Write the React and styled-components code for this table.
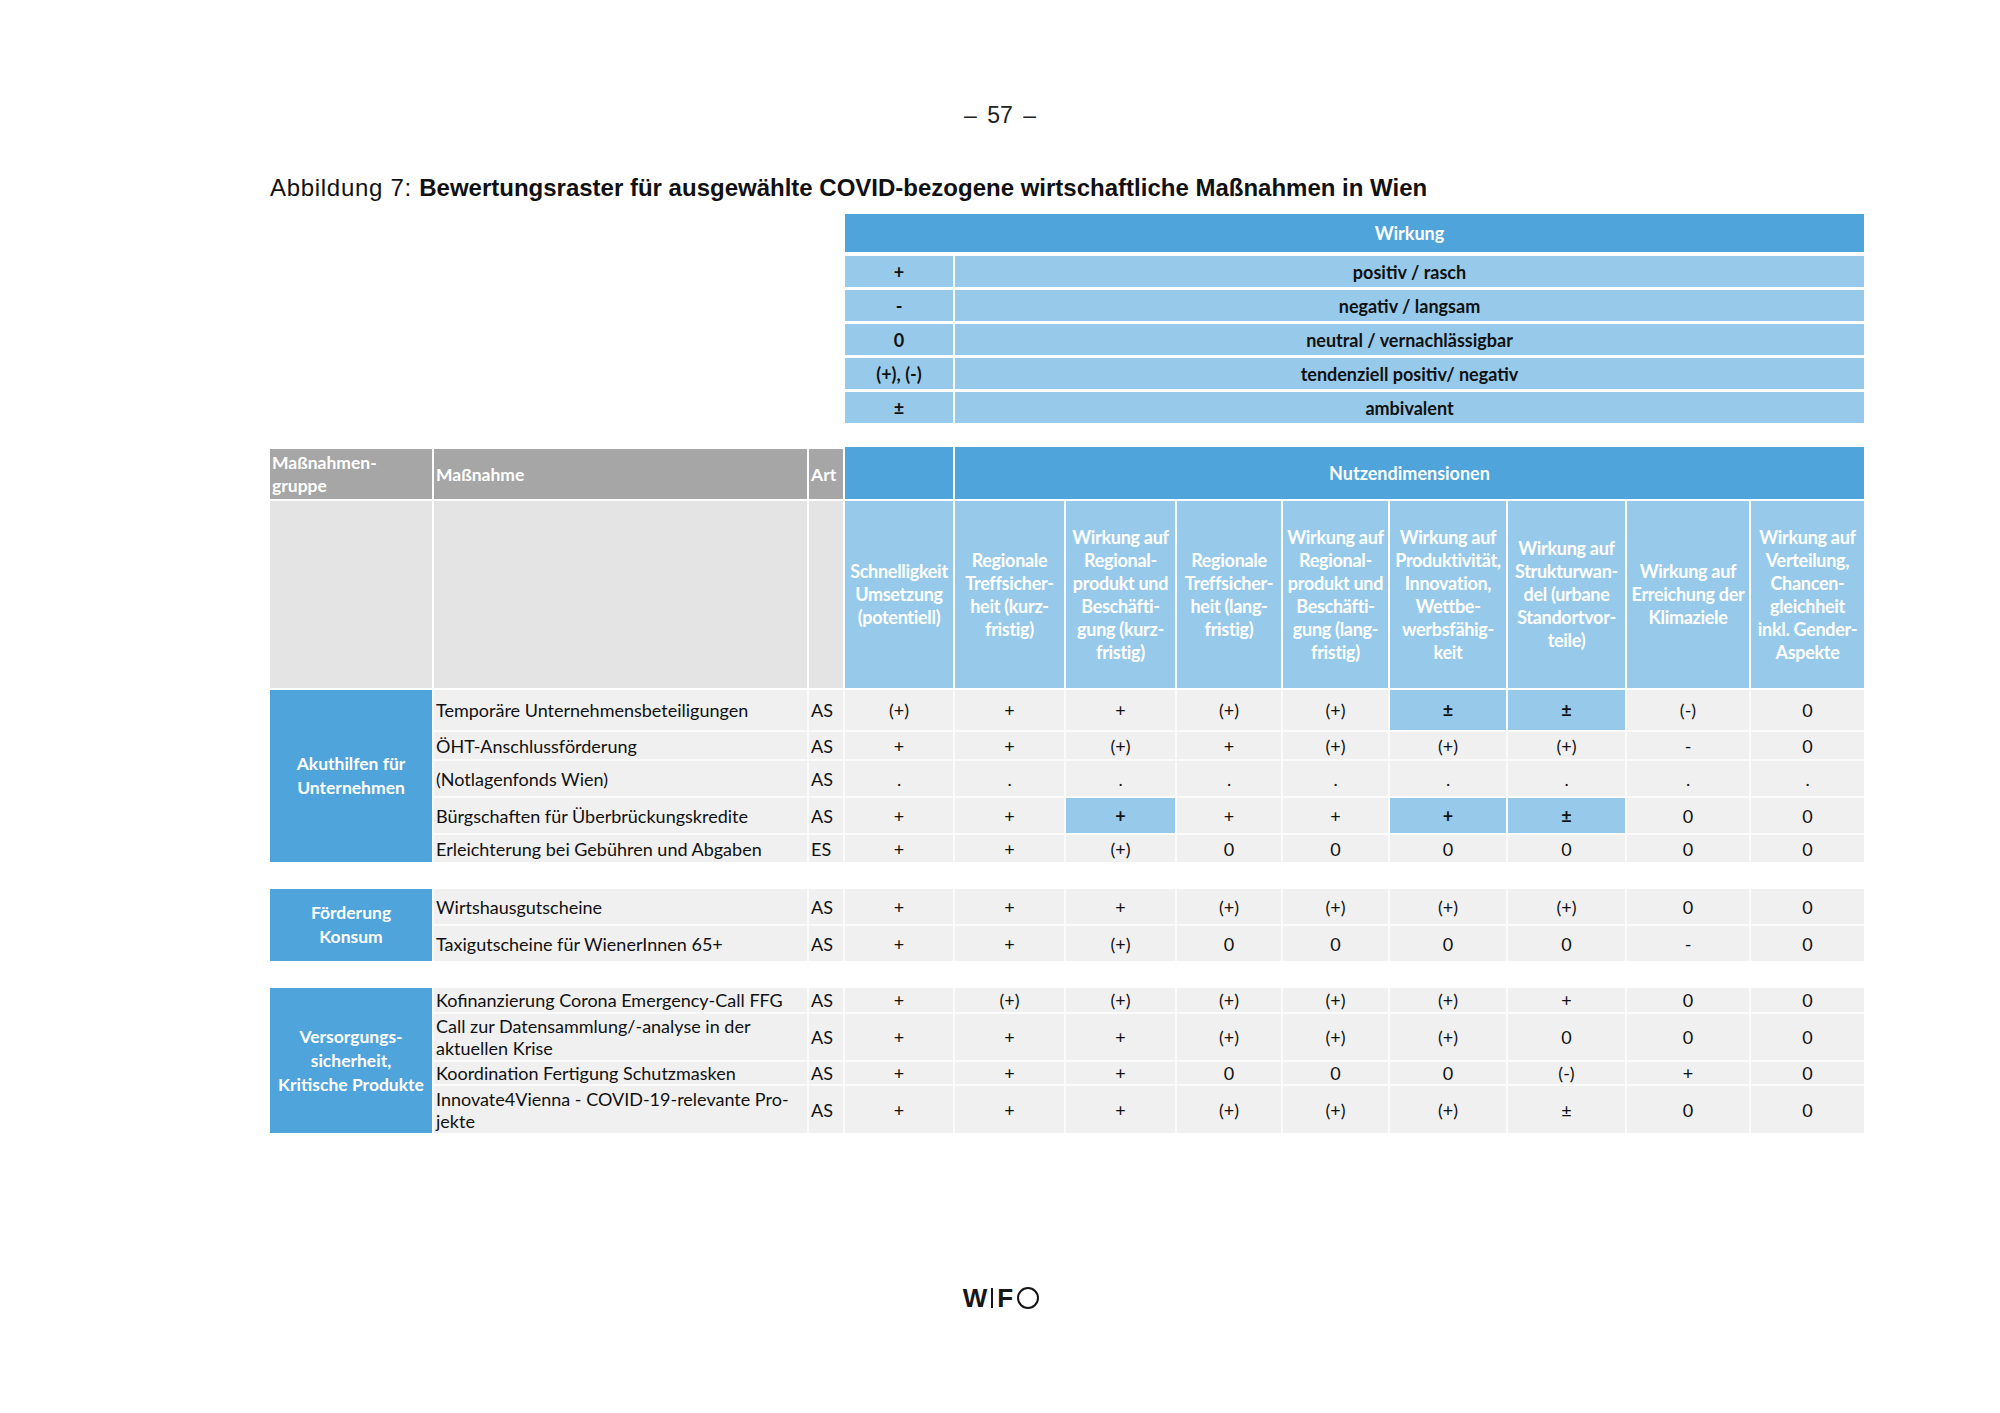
import React from "react";
import styled, { createGlobalStyle, css } from "styled-components";

const DARK = "#4fa4dc";
const LIGHT = "#97caea";
const COLS = "162px 373px 34px 108px 109px 109px 104px 105px 116px 117px 122px 113px";

const GlobalStyle = createGlobalStyle`
  html, body {
    margin: 0;
    padding: 0;
    background: #fff;
  }
  body {
    font-family: Lato, "Liberation Sans", sans-serif;
    color: #111;
  }
`;

const dimensions = [
  ["Schnelligkeit", "Umsetzung", "(potentiell)"],
  ["Regionale", "Treffsicher-", "heit (kurz-", "fristig)"],
  ["Wirkung auf", "Regional-", "produkt und", "Beschäfti-", "gung (kurz-", "fristig)"],
  ["Regionale", "Treffsicher-", "heit (lang-", "fristig)"],
  ["Wirkung auf", "Regional-", "produkt und", "Beschäfti-", "gung (lang-", "fristig)"],
  ["Wirkung auf", "Produktivität,", "Innovation,", "Wettbe-", "werbsfähig-", "keit"],
  ["Wirkung auf", "Strukturwan-", "del (urbane", "Standortvor-", "teile)"],
  ["Wirkung auf", "Erreichung der", "Klimaziele"],
  ["Wirkung auf", "Verteilung,", "Chancen-", "gleichheit", "inkl. Gender-", "Aspekte"],
];

const legend = [
  ["+", "positiv / rasch"],
  ["-", "negativ / langsam"],
  ["0", "neutral / vernachlässigbar"],
  ["(+), (-)", "tendenziell positiv/ negativ"],
  ["±", "ambivalent"],
];

// a trailing "*" marks a highlighted cell
const groups = [
  {
    name: ["Akuthilfen für", "Unternehmen"],
    rows: "40px 27px 35px 35px 27px",
    gap: 2,
    items: [
      { label: ["Temporäre Unternehmensbeteiligungen"], art: "AS", values: ["(+)", "+", "+", "(+)", "(+)", "±*", "±*", "(-)", "0"] },
      { label: ["ÖHT-Anschlussförderung"], art: "AS", values: ["+", "+", "(+)", "+", "(+)", "(+)", "(+)", "-", "0"] },
      { label: ["(Notlagenfonds Wien)"], art: "AS", values: [".", ".", ".", ".", ".", ".", ".", ".", "."] },
      { label: ["Bürgschaften für Überbrückungskredite"], art: "AS", values: ["+", "+", "+*", "+", "+", "+*", "±*", "0", "0"] },
      { label: ["Erleichterung bei Gebühren und Abgaben"], art: "ES", values: ["+", "+", "(+)", "0", "0", "0", "0", "0", "0"] },
    ],
  },
  {
    name: ["Förderung", "Konsum"],
    rows: "35px 35px",
    gap: 27,
    items: [
      { label: ["Wirtshausgutscheine"], art: "AS", values: ["+", "+", "+", "(+)", "(+)", "(+)", "(+)", "0", "0"] },
      { label: ["Taxigutscheine für WienerInnen 65+"], art: "AS", values: ["+", "+", "(+)", "0", "0", "0", "0", "-", "0"] },
    ],
  },
  {
    name: ["Versorgungs-", "sicherheit,", "Kritische Produkte"],
    rows: "24px 46px 22px 47px",
    gap: 27,
    items: [
      { label: ["Kofinanzierung Corona Emergency-Call FFG"], art: "AS", values: ["+", "(+)", "(+)", "(+)", "(+)", "(+)", "+", "0", "0"] },
      { label: ["Call zur Datensammlung/-analyse in der", "aktuellen Krise"], art: "AS", values: ["+", "+", "+", "(+)", "(+)", "(+)", "0", "0", "0"] },
      { label: ["Koordination Fertigung Schutzmasken"], art: "AS", values: ["+", "+", "+", "0", "0", "0", "(-)", "+", "0"] },
      { label: ["Innovate4Vienna - COVID-19-relevante Pro-", "jekte"], art: "AS", values: ["+", "+", "+", "(+)", "(+)", "(+)", "±", "0", "0"] },
    ],
  },
];

function Lines({ lines }) {
  return lines.map((line, i) => (
    <React.Fragment key={i}>
      {i > 0 && <br />}
      {line}
    </React.Fragment>
  ));
}

function Logo() {
  return (
    <LogoWrap aria-label="WIFO">
      <LogoLetter>W</LogoLetter>
      <LogoBar />
      <LogoLetter>F</LogoLetter>
      <LogoRing />
    </LogoWrap>
  );
}

function App() {
  return (
    <Page>
      <GlobalStyle />
      <PageNumber>– 57 –</PageNumber>
      <Content>
        <Title>
          <span>Abbildung 7: </span>
          <strong>Bewertungsraster für ausgewählte COVID-bezogene wirtschaftliche Maßnahmen in Wien</strong>
        </Title>

        <Legend>
          <LegendHead>Wirkung</LegendHead>
          {legend.map(([symbol, text]) => (
            <React.Fragment key={symbol}>
              <LegendCell>{symbol}</LegendCell>
              <LegendCell>{text}</LegendCell>
            </React.Fragment>
          ))}
        </Legend>

        <HeadGrid>
          <GrayHead>
            <Lines lines={["Maßnahmen-", "gruppe"]} />
          </GrayHead>
          <GrayHead>Maßnahme</GrayHead>
          <GrayHead>Art</GrayHead>
          <BlueHead />
          <BlueHead $span={8}>Nutzendimensionen</BlueHead>
          <PaleCell />
          <PaleCell />
          <PaleCell />
          {dimensions.map((lines, i) => (
            <DimHead key={i}>
              <div>
                <Lines lines={lines} />
              </div>
            </DimHead>
          ))}
        </HeadGrid>

        {groups.map((group) => (
          <GroupGrid key={group.name.join()} $rows={group.rows} $gap={group.gap}>
            <GroupCell>
              <div>
                <Lines lines={group.name} />
              </div>
            </GroupCell>
            {group.items.map((item) => (
              <React.Fragment key={item.label.join()}>
                <MeasureCell>
                  <div>
                    <Lines lines={item.label} />
                  </div>
                </MeasureCell>
                <ArtCell>{item.art}</ArtCell>
                {item.values.map((v, i) => {
                  const hl = v.endsWith("*");
                  return (
                    <ValueCell key={i} $hl={hl}>
                      {hl ? v.slice(0, -1) : v}
                    </ValueCell>
                  );
                })}
              </React.Fragment>
            ))}
          </GroupGrid>
        ))}
      </Content>
      <Footer>
        <Logo />
      </Footer>
    </Page>
  );
}

export default App;

const Page = styled.div`
  width: 2000px;
  height: 1413px;
  display: flex;
  flex-direction: column;
  overflow: hidden;
`;

const PageNumber = styled.div`
  margin-top: 100px;
  height: 30px;
  text-align: center;
  font-family: "Liberation Sans", sans-serif;
  font-size: 23px;
  line-height: 30px;
  color: #222;
  word-spacing: 4px;
`;

const Content = styled.div`
  margin-left: 270px;
  width: 1594px;
  display: flex;
  flex-direction: column;
`;

const Title = styled.div`
  margin-top: 43px;
  height: 30px;
  font-family: "Liberation Sans", sans-serif;
  font-size: 24px;
  line-height: 30px;
  color: #111;
  white-space: nowrap;

  span {
    letter-spacing: 0.7px;
  }

  strong {
    font-weight: 700;
    letter-spacing: 0;
  }
`;

const Legend = styled.div`
  margin-top: 11px;
  margin-left: 575px;
  width: 1019px;
  display: grid;
  grid-template-columns: 108px 1fr;
  grid-template-rows: 39px repeat(5, 31px);
  column-gap: 2px;
  row-gap: 3px;
`;

const LegendHead = styled.div`
  grid-column: 1 / -1;
  background: ${DARK};
  color: #fff;
  font-weight: 700;
  font-size: 18px;
  display: flex;
  align-items: center;
  justify-content: center;
  padding-left: 110px;
  margin-bottom: 1px;
`;

const LegendCell = styled.div`
  background: ${LIGHT};
  color: #111;
  font-weight: 700;
  font-size: 18px;
  display: flex;
  align-items: center;
  justify-content: center;
`;

const HeadGrid = styled.div`
  margin-top: 24px;
  display: grid;
  grid-template-columns: ${COLS};
  grid-template-rows: 52px 187px;
  column-gap: 2px;
  row-gap: 2px;
`;

const headText = css`
  color: #fff;
  font-weight: 700;
  font-size: 18px;
  line-height: 23px;
`;

const GrayHead = styled.div`
  ${headText};
  font-size: 17.5px;
  background: #a6a6a6;
  margin-top: 2px;
  padding-left: 2px;
  display: flex;
  align-items: center;
`;

const BlueHead = styled.div`
  ${headText};
  background: ${DARK};
  grid-column: span ${(p) => p.$span || 1};
  display: flex;
  align-items: center;
  justify-content: center;
`;

const PaleCell = styled.div`
  background: #e4e4e4;
`;

const DimHead = styled.div`
  ${headText};
  background: ${LIGHT};
  display: flex;
  align-items: center;
  justify-content: center;
  text-align: center;
  white-space: nowrap;
  letter-spacing: -0.3px;
`;

const GroupGrid = styled.div`
  margin-top: ${(p) => p.$gap}px;
  display: grid;
  grid-template-columns: ${COLS};
  grid-template-rows: ${(p) => p.$rows};
  column-gap: 2px;
  row-gap: 2px;
  background: #fbfbfb;
`;

const GroupCell = styled.div`
  ${headText};
  font-size: 17.5px;
  line-height: 24px;
  grid-row: 1 / -1;
  background: ${DARK};
  display: flex;
  align-items: center;
  justify-content: center;
  text-align: center;
  white-space: nowrap;
`;

const bodyText = css`
  background: #f0f0f0;
  font-size: 18px;
  line-height: 22px;
  color: #111;
  display: flex;
  align-items: center;
`;

const MeasureCell = styled.div`
  ${bodyText};
  padding-left: 2px;
  white-space: nowrap;
`;

const ArtCell = styled.div`
  ${bodyText};
  padding-left: 2px;
`;

const ValueCell = styled.div`
  ${bodyText};
  justify-content: center;
  background: ${(p) => (p.$hl ? LIGHT : "#f0f0f0")};
  font-weight: ${(p) => (p.$hl ? 700 : 400)};
`;

const Footer = styled.div`
  margin-top: auto;
  margin-bottom: 104px;
  display: flex;
  justify-content: center;
`;

const LogoWrap = styled.div`
  display: flex;
  align-items: center;
  gap: 3px;
  height: 22px;
  margin-left: 2px;
`;

const LogoLetter = styled.span`
  font-family: "Liberation Sans", sans-serif;
  font-weight: 700;
  font-size: 26px;
  line-height: 22px;
  color: #161616;
`;

const LogoBar = styled.span`
  width: 2px;
  height: 20px;
  background: #161616;
  margin: 0 1px;
`;

const LogoRing = styled.span`
  width: 18px;
  height: 18px;
  border: 2px solid #161616;
  border-radius: 50%;
  margin-left: 1px;
`;
